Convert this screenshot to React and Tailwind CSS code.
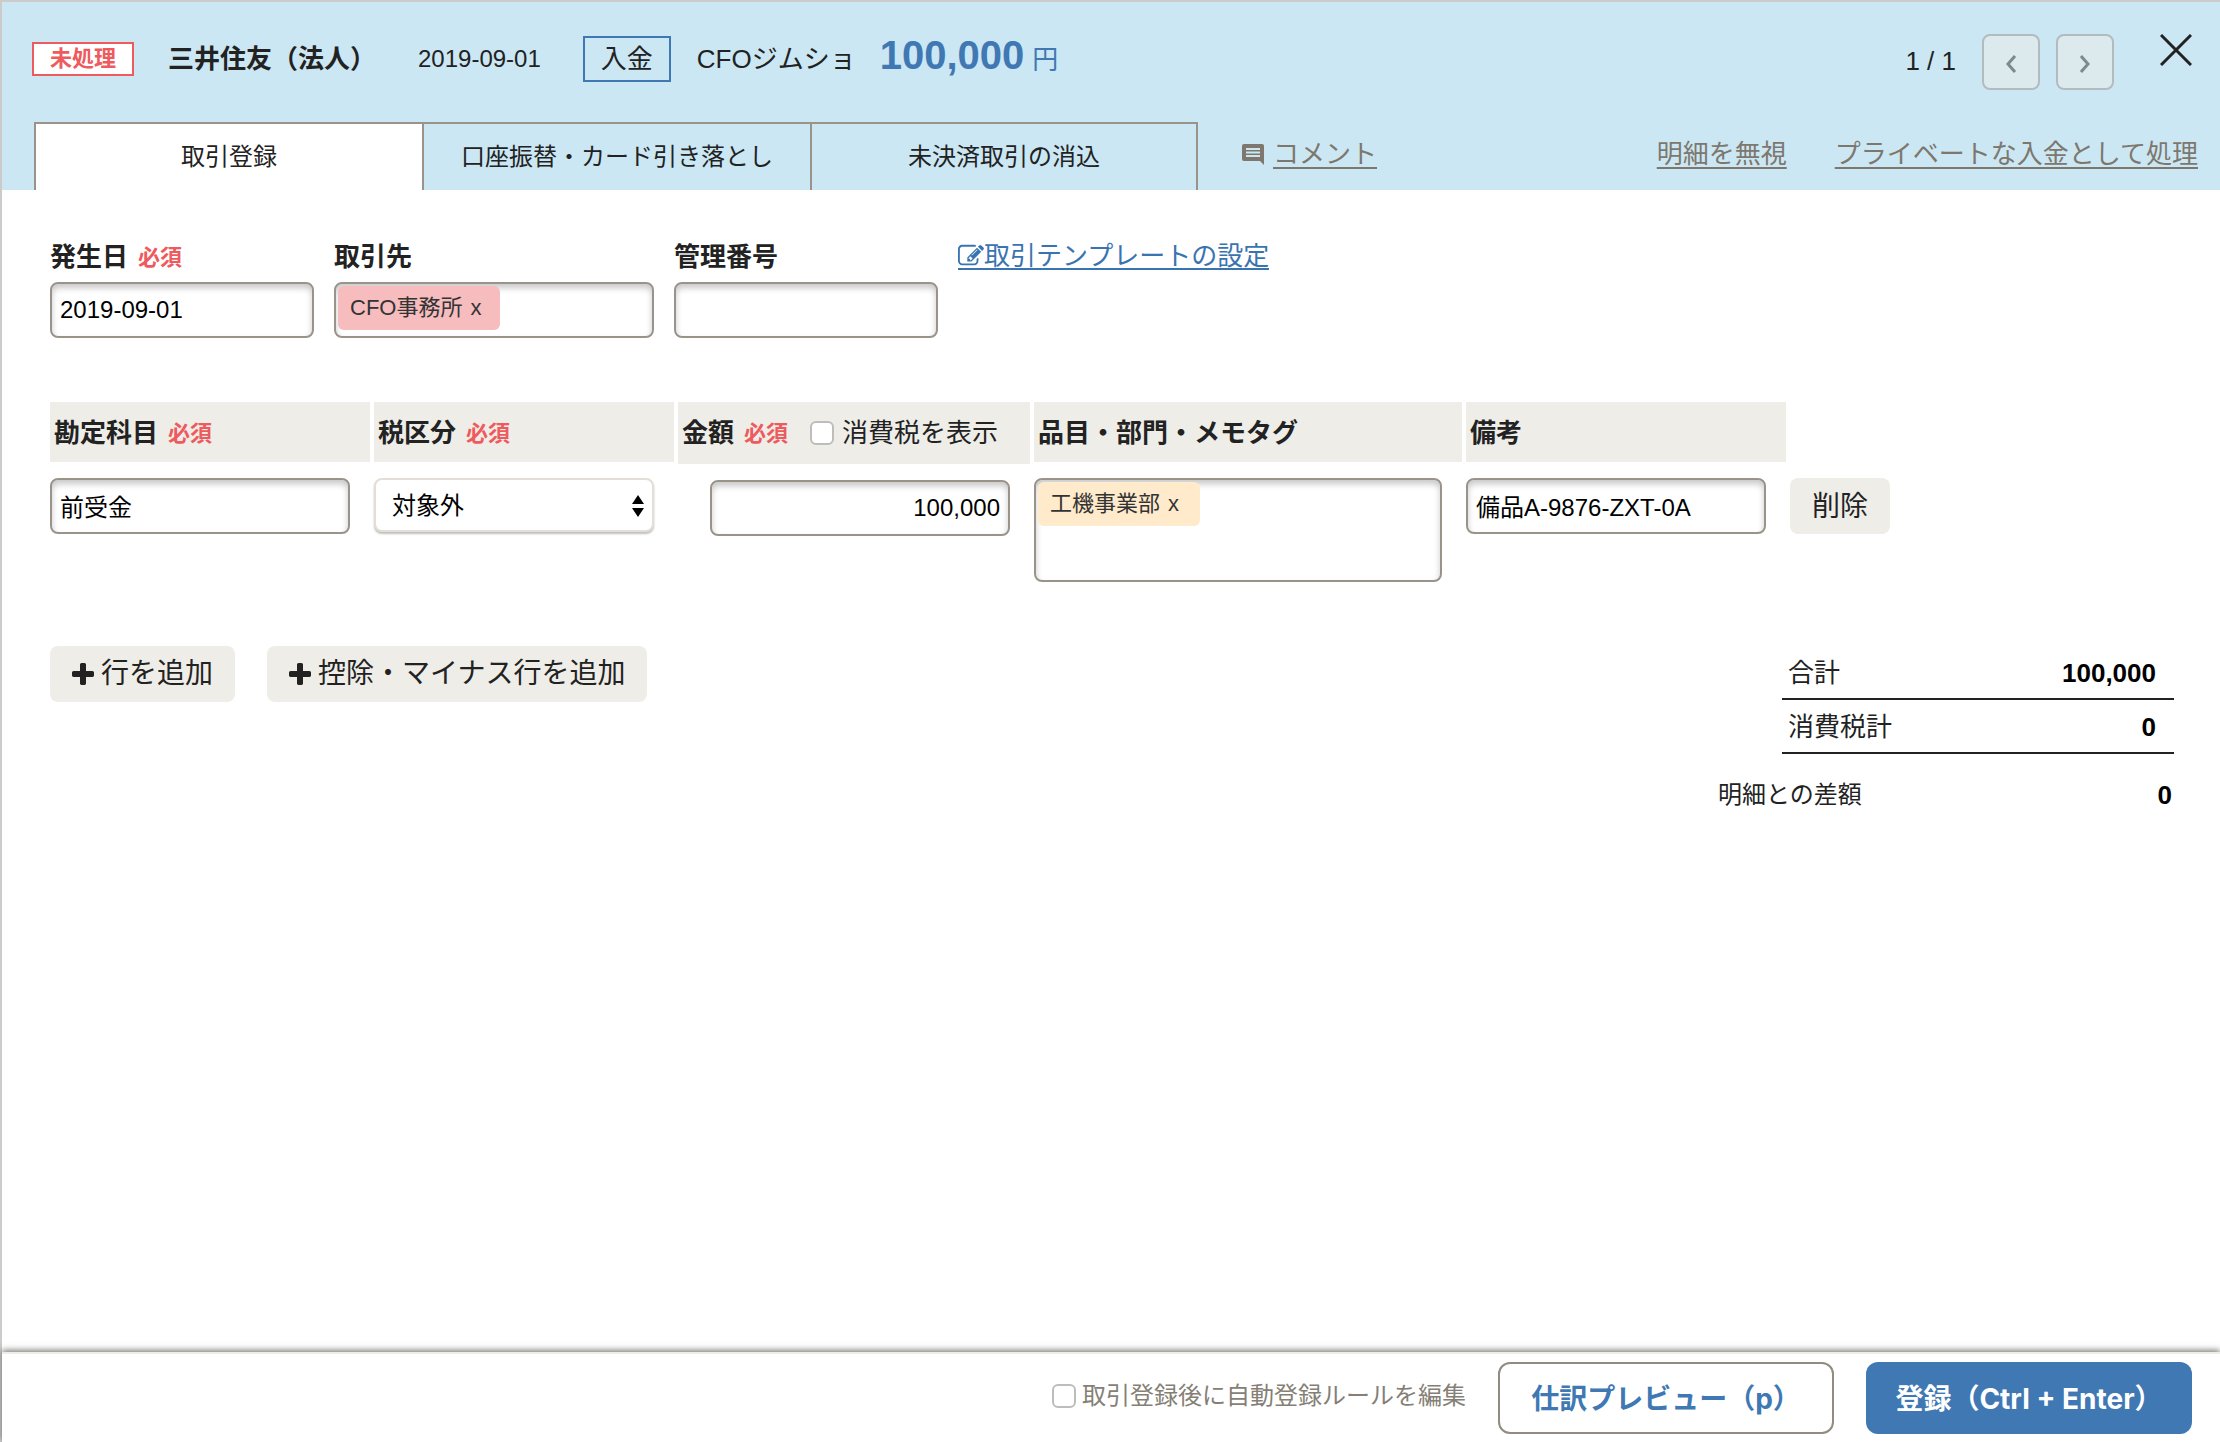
import React, { useState } from "react";

const tabs = ["取引登録", "口座振替・カード引き落とし", "未決済取引の消込"];

const inputClass =
  "h-14 rounded-lg border-2 border-[#99938a] bg-white px-2 text-2xl leading-8 text-black shadow-[inset_0_4px_6px_rgba(0,0,0,0.22)] outline-none";

const checkboxClass =
  "h-6 w-6 appearance-none rounded-md border-2 border-[#bdbdbb] bg-white checked:bg-[#4078b3]";

const Required = () => (
  <span className="ml-[10px] text-[22px] font-bold text-[#ee5a5d]">必須</span>
);

const CommentIcon = () => (
  <svg viewBox="0 0 22 22" className="h-[22px] w-[22px]" fill="none">
    <path d="M2 1h18a2 2 0 0 1 2 2v19l-4-4H2a2 2 0 0 1-2-2V3a2 2 0 0 1 2-2Z" fill="#7d776e" />
    <path d="M4 6h14M4 9.500h14M4 13h14" stroke="#cbe7f3" strokeWidth="2" />
  </svg>
);

const EditIcon = () => (
  <svg viewBox="0 0 1792 1792" className="mt-[5px] h-[26px] w-[26px]" fill="currentColor">
    <path d="M888 1184l116-116-152-152-116 116v56h96v96h56zm440-720q-16-16-33 1l-350 350q-17 17-1 33t33-1l350-350q17-17 1-33zm80 594v190q0 119-84.5 203.5t-203.5 84.5h-832q-119 0-203.5-84.5t-84.5-203.5v-832q0-119 84.5-203.5t203.5-84.5h832q63 0 117 25 15 7 18 23 3 17-9 29l-49 49q-14 14-32 8-23-6-45-6h-832q-66 0-113 47t-47 113v832q0 66 47 113t113 47h832q66 0 113-47t47-113v-126q0-13 9-22l64-64q15-15 35-7t20 29zm-96-738l288 288-672 672h-288v-288zm444 132l-92 92-288-288 92-92q28-28 68-28t68 28l152 152q28 28 28 68t-28 68z" />
  </svg>
);

const PlusIcon = () => (
  <svg viewBox="192 128 1408 1408" className="h-[22px] w-[22px]" fill="currentColor">
    <path d="M1600 736v192q0 40-28 68t-68 28h-416v416q0 40-28 68t-68 28h-192q-40 0-68-28t-28-68v-416h-416q-40 0-68-28t-28-68v-192q0-40 28-68t68-28h416v-416q0-40 28-68t68-28h192q40 0 68 28t28 68v416h416q40 0 68 28t28 68z" />
  </svg>
);

const Chevron = ({ d }) => (
  <svg viewBox="0 0 12 20" className="h-5 w-3" fill="none">
    <path d={d} stroke="#7f898d" strokeWidth="3" />
  </svg>
);

const Tag = ({ label, className }) => (
  <span
    className={`flex h-11 w-[162px] items-center rounded-md pl-3 text-[22px] leading-8 whitespace-nowrap text-[#333] ${className}`}
  >
    {label}
    <button type="button" className="ml-2" aria-label={`${label} を外す`}>
      x
    </button>
  </span>
);

const Header = ({ active, onSelect }) => (
  <header className="flex h-[188px] flex-col justify-between bg-[#cbe7f3] pt-8">
    <div className="flex items-start justify-between pr-7 pl-[30px]">
      <div className="flex h-[50px] items-center text-[26px] leading-[46px] whitespace-nowrap">
        <span className="flex h-[34px] w-[102px] items-center justify-center border-2 border-[#ee5a5d] bg-white text-[22px] font-bold text-[#ee5a5d]">
          未処理
        </span>
        <span className="ml-[34px] font-bold">三井住友（法人）</span>
        <span className="ml-[42px] text-2xl">2019-09-01</span>
        <span className="ml-[42px] flex h-[46px] w-[88px] items-center justify-center border-2 border-[#4078b3]">
          入金
        </span>
        <span className="ml-[26px]">CFOジムショ</span>
        <span className="ml-6 flex items-baseline gap-2 text-[#4078b3]">
          <span className="text-[40px] leading-10 font-bold">100,000</span>
          <span>円</span>
        </span>
      </div>
      <div className="flex h-14 items-center">
        <span className="mr-[26px] pb-0.5 text-[26px]">1 / 1</span>
        <button
          type="button"
          aria-label="前へ"
          className="mr-4 flex h-14 w-[58px] items-center justify-center rounded-lg border-2 border-[#b2bcbe] bg-[#dce9ed] pt-1"
        >
          <Chevron d="M10 2 3 10l7 8" />
        </button>
        <button
          type="button"
          aria-label="次へ"
          className="flex h-14 w-[58px] items-center justify-center rounded-lg border-2 border-[#b2bcbe] bg-[#dce9ed] pt-1"
        >
          <Chevron d="M2 2l7 8-7 8" />
        </button>
        <button type="button" aria-label="閉じる" className="ml-[46px] self-start">
          <svg viewBox="0 0 32 32" className="h-8 w-8" fill="none">
            <path d="M1 1l30 30M31 1 1 31" stroke="#222" strokeWidth="3" />
          </svg>
        </button>
      </div>
    </div>

    <div className="flex pr-[22px] pl-8">
      <nav className="flex">
        {tabs.map((tab, i) => (
          <button
            key={tab}
            type="button"
            onClick={() => onSelect(i)}
            className={`h-[68px] w-[388px] border-t-2 border-l-2 border-[#99938a] text-2xl whitespace-nowrap last:border-r-2 ${
              active === i ? "bg-white" : ""
            }`}
          >
            {tab}
          </button>
        ))}
      </nav>
      <div className="flex h-16 flex-1 items-center text-[26px] whitespace-nowrap text-[#7d776e]">
        <a href="#comment" className="ml-11 flex items-center gap-[9px]">
          <CommentIcon />
          <span className="underline decoration-2 underline-offset-4">コメント</span>
        </a>
        <a href="#ignore" className="ml-auto underline decoration-2 underline-offset-4">
          明細を無視
        </a>
        <a href="#private" className="ml-12 underline decoration-2 underline-offset-4">
          プライベートな入金として処理
        </a>
      </div>
    </div>
  </header>
);

const HeadCell = ({ children, className = "h-[60px] pt-0.5" }) => (
  <th className="p-0 text-left align-top">
    <div className={`flex items-center bg-[#eeede8] pl-1 text-[26px] whitespace-nowrap ${className}`}>
      {children}
    </div>
  </th>
);

const DetailTable = ({ showTax, onShowTax }) => (
  <table className="-mx-1 mt-16 w-[1848px] table-fixed border-separate border-spacing-x-1 border-spacing-y-0">
    <colgroup>
      <col className="w-80" />
      <col className="w-[300px]" />
      <col className="w-[352px]" />
      <col className="w-[428px]" />
      <col className="w-80" />
      <col className="w-[100px]" />
    </colgroup>
    <thead>
      <tr>
        <HeadCell>
          勘定科目
          <Required />
        </HeadCell>
        <HeadCell>
          税区分
          <Required />
        </HeadCell>
        <HeadCell className="h-[62px]">
          金額
          <Required />
          <label className="ml-[22px] flex items-center gap-2 font-normal">
            <input
              type="checkbox"
              checked={showTax}
              onChange={(e) => onShowTax(e.target.checked)}
              className={checkboxClass}
            />
            消費税を表示
          </label>
        </HeadCell>
        <HeadCell>品目・部門・メモタグ</HeadCell>
        <HeadCell>備考</HeadCell>
        <td></td>
      </tr>
    </thead>
    <tbody>
      <tr className="align-top">
        <td className="px-0 pt-[14px] pb-0">
          <input
            aria-label="勘定科目"
            defaultValue="前受金"
            className={`${inputClass} w-[300px] pb-0.5`}
          />
        </td>
        <td className="px-0 pt-[14px] pb-0">
          <div className="relative w-[280px]">
            <select
              aria-label="税区分"
              className="block h-[54px] w-full appearance-none rounded-lg border-2 border-[#e4dfd6] bg-white px-4 pt-0.5 text-2xl text-black shadow-[0_2px_2px_rgba(0,0,0,0.25)]"
            >
              <option>対象外</option>
            </select>
            <svg
              viewBox="0 0 12 22"
              className="pointer-events-none absolute top-[17px] right-2.5 h-[22px] w-3"
            >
              <path d="M6 0l6 9H0zM6 22l6-9H0z" fill="#000" />
            </svg>
          </div>
        </td>
        <td className="px-0 pt-4 pb-0 pl-8">
          <input
            aria-label="金額"
            defaultValue="100,000"
            className={`${inputClass} w-[300px] text-right`}
          />
        </td>
        <td className="px-0 pt-[14px] pb-0">
          <div className="flex h-[104px] w-[408px] items-start rounded-lg border-2 border-[#99938a] p-0.5 shadow-[inset_0_4px_6px_rgba(0,0,0,0.22)]">
            <Tag label="工機事業部" className="bg-[#ffeacb]" />
            <input aria-label="品目・部門・メモタグ" className="h-11 min-w-0 flex-1 outline-none" />
          </div>
        </td>
        <td className="px-0 pt-[14px] pb-0">
          <input
            aria-label="備考"
            defaultValue="備品A-9876-ZXT-0A"
            className={`${inputClass} w-[300px] pb-0.5`}
          />
        </td>
        <td className="px-0 pt-[14px] pb-0">
          <button type="button" className="h-14 w-full rounded-lg bg-[#eeede8] pt-0.5 text-[28px]">
            削除
          </button>
        </td>
      </tr>
    </tbody>
  </table>
);

const AddButton = ({ children }) => (
  <button
    type="button"
    className="flex h-14 items-center gap-[7px] rounded-lg bg-[#eeede8] px-[22px] text-[28px] whitespace-nowrap"
  >
    <PlusIcon />
    {children}
  </button>
);

const Totals = () => (
  <dl className="w-[456px] text-[26px] leading-[54px]">
    <div className="ml-16 flex h-[54px] justify-between border-b-2 border-[#222] pr-[18px] pl-1.5">
      <dt>合計</dt>
      <dd className="font-bold text-black">100,000</dd>
    </div>
    <div className="ml-16 flex h-[54px] justify-between border-b-2 border-[#222] pr-[18px] pl-1.5">
      <dt>消費税計</dt>
      <dd className="font-bold text-black">0</dd>
    </div>
    <div className="mt-[14px] flex justify-between pr-0.5">
      <dt className="text-2xl leading-[54px]">明細との差額</dt>
      <dd className="font-bold text-black">0</dd>
    </div>
  </dl>
);

const Footer = () => (
  <footer className="flex h-[90px] items-center justify-end border-t-2 border-[#eeede8] bg-white pr-7 shadow-[0_-2px_6px_rgba(0,0,0,0.5)]">
    <label className="mr-8 flex items-center gap-1.5 pb-1 text-2xl text-[#857f76]">
      <input type="checkbox" className={checkboxClass} />
      取引登録後に自動登録ルールを編集
    </label>
    <button
      type="button"
      className="mr-8 h-[72px] w-[336px] rounded-xl border-2 border-[#918b80] bg-white pt-0.5 font-['Inter','Noto_Sans_CJK_JP',sans-serif] text-[28px] font-bold text-[#4078b3]"
    >
      仕訳プレビュー（p）
    </button>
    <button
      type="button"
      className="h-[72px] w-[326px] rounded-xl bg-[#4078b3] pt-0.5 font-['Inter','Noto_Sans_CJK_JP',sans-serif] text-[28px] font-bold whitespace-nowrap text-white"
    >
      登録（Ctrl + Enter）
    </button>
  </footer>
);

const App = () => {
  const [active, setActive] = useState(0);
  const [showTax, setShowTax] = useState(false);

  return (
    <div className="flex min-h-screen flex-col border-t-2 border-l-2 border-[#cccaca] bg-white font-['Liberation_Sans','Noto_Sans_CJK_JP',sans-serif] text-[#222]">
      <Header active={active} onSelect={setActive} />

      <main className="flex-1 pt-11 pr-[46px] pl-12">
        <div className="flex gap-5 text-[26px] whitespace-nowrap">
          <div className="w-[264px]">
            <label htmlFor="date" className="mb-0.5 flex h-[46px] items-center font-bold">
              発生日
              <Required />
            </label>
            <input id="date" defaultValue="2019-09-01" className={`${inputClass} w-full`} />
          </div>
          <div className="w-80">
            <label htmlFor="partner" className="mb-0.5 flex h-[46px] items-center font-bold">
              取引先
            </label>
            <div className="flex h-14 rounded-lg border-2 border-[#99938a] p-0.5 shadow-[inset_0_4px_6px_rgba(0,0,0,0.22)]">
              <Tag label="CFO事務所" className="bg-[#f6bcbe]" />
              <input id="partner" className="min-w-0 flex-1 outline-none" />
            </div>
          </div>
          <div className="w-[264px]">
            <label htmlFor="number" className="mb-0.5 flex h-[46px] items-center font-bold">
              管理番号
            </label>
            <input id="number" className={`${inputClass} w-full`} />
          </div>
          <a
            href="#template"
            className="mt-1 flex h-8 items-start border-b-2 border-[#3a74b0] leading-9 text-[#3a74b0]"
          >
            <EditIcon />
            取引テンプレートの設定
          </a>
        </div>

        <DetailTable showTax={showTax} onShowTax={setShowTax} />

        <div className="mt-16 flex items-start justify-between">
          <div className="flex gap-8">
            <AddButton>行を追加</AddButton>
            <AddButton>控除・マイナス行を追加</AddButton>
          </div>
          <Totals />
        </div>
      </main>

      <Footer />
    </div>
  );
};

export default App;
